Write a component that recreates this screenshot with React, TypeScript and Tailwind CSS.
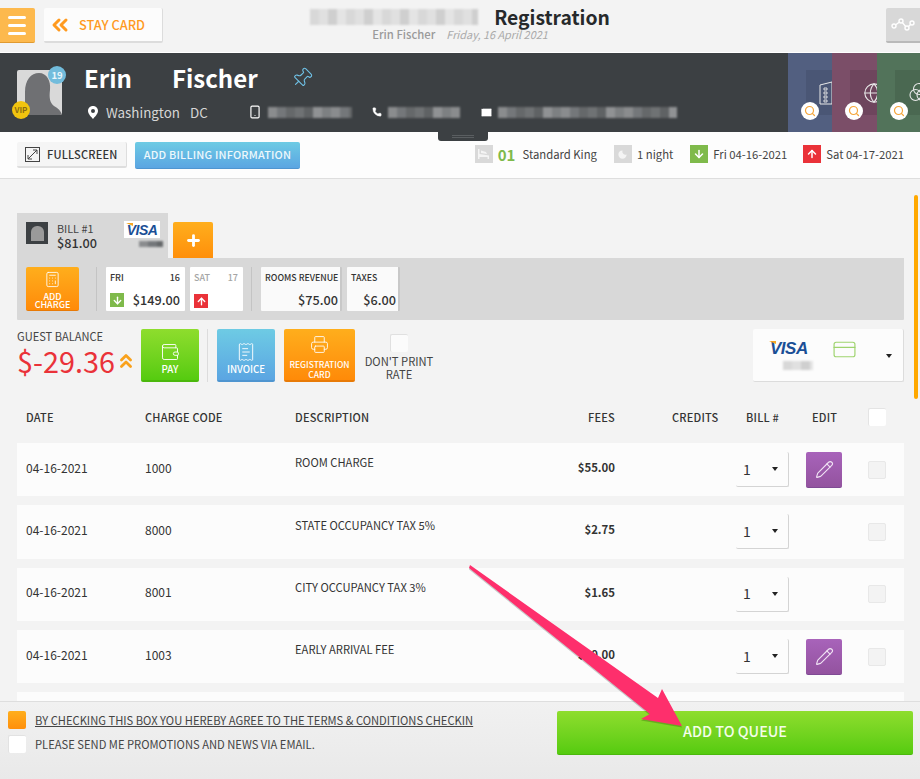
import {
  ArrowDown,
  ArrowUp,
  Calculator,
  ChevronsLeft,
  ChevronsUp,
  CreditCard,
  Globe,
  Mail,
  Pencil,
  Phone,
  Pin,
  Plus,
  Printer,
  ReceiptText,
  Search,
  Smartphone,
  Wallet,
} from "lucide-react";
import type { ReactNode } from "react";

const shades = ["#8a8c8e", "#6f7274", "#7d8082", "#65686a", "#909294", "#74777a", "#5f6264"];

// pixelated block standing in for the redacted values
function Mosaic({ width, height, light }: { width: number; height: number; light?: boolean }) {
  const cells = Array.from({ length: Math.ceil(width / 9) }, (_, i) => i);
  return (
    <div className="flex overflow-hidden blur-[1px]" style={{ width, height }}>
      {cells.map((i) => (
        <div
          key={i}
          className="h-full w-[9px] shrink-0"
          style={{
            background: light
              ? ["#d8d8d8", "#e4e4e4", "#cfcfcf", "#e0e0e0"][(i * 3) % 4]
              : shades[(i * 5) % shades.length],
          }}
        />
      ))}
    </div>
  );
}

function SquareIcon({ color, children }: { color: string; children: ReactNode }) {
  return <div className={`flex h-[18px] w-[18px] items-center justify-center text-white ${color}`}>{children}</div>;
}

function VisaMark({ small }: { small?: boolean }) {
  return (
    <span
      className={`relative font-['Liberation_Sans',sans-serif] font-bold italic tracking-[-0.5px] text-[#1a4f96] ${
        small ? "text-[14px] leading-[14px]" : "text-[17px] leading-[16px]"
      }`}
    >
      <span className="absolute left-[-1px] top-[0px] h-0 w-0 border-l-[7px] border-t-[3px] border-l-transparent border-t-[#f5a623]" />
      VISA
    </span>
  );
}

function SideTab({ width, color, inner, icon }: { width: string; color: string; inner: string; icon: ReactNode }) {
  return (
    <div className={`relative overflow-hidden ${width} ${color}`}>
      <div className={`ml-[18px] mt-[17px] flex h-[45px] w-[45px] items-center pl-[13px] text-[#e8e8e8] ${inner}`}>
        {icon}
      </div>
      <div className="absolute left-[13px] top-[49px] flex h-[18px] w-[18px] items-center justify-center rounded-full bg-white text-[#f5a53a]">
        <Search size={12} strokeWidth={2.4} />
      </div>
    </div>
  );
}

function ActionButton({
  width,
  tone,
  icon,
  children,
}: {
  width: string;
  tone: string;
  icon: ReactNode;
  children: ReactNode;
}) {
  return (
    <div
      className={`flex h-[53px] flex-col items-center rounded-[2px] border-b-2 font-medium text-white ${width} ${tone}`}
    >
      {icon}
      <div className="text-center">{children}</div>
    </div>
  );
}

const orange = "bg-gradient-to-b from-[#ffae1c] to-[#ff8a08] border-[#e87a06]";

function DayCard({
  day,
  date,
  amount,
  width,
  muted,
  up,
}: {
  day: string;
  date: string;
  amount?: string;
  width: string;
  muted?: boolean;
  up?: boolean;
}) {
  return (
    <div className={`flex h-[44px] flex-col justify-between rounded-[1px] bg-white pb-[3px] pl-[4px] pr-[5px] pt-[5px] ${width}`}>
      <div className={`flex justify-between text-[9px] font-medium leading-[12px] ${muted ? "text-[#a5a5a5]" : "text-[#333]"}`}>
        <span>{day}</span>
        <span>{date}</span>
      </div>
      <div className="flex items-center justify-between">
        <div className={`flex h-[14px] w-[14px] items-center justify-center text-white ${up ? "bg-[#ea3239]" : "bg-[#7fba4b]"}`}>
          {up ? <ArrowUp size={11} strokeWidth={3} /> : <ArrowDown size={11} strokeWidth={3} />}
        </div>
        {amount && <span className="text-[12.7px] font-medium leading-[16px] text-[#333]">{amount}</span>}
      </div>
    </div>
  );
}

function TotalCard({ label, amount, width }: { label: string; amount: string; width: string }) {
  return (
    <div className={`flex h-[44px] flex-col justify-between rounded-[1px] border-r-2 border-[#c8c8c8] bg-[#fafafa] pb-[3px] pl-[4px] pr-[2px] pt-[5px] ${width}`}>
      <div className="whitespace-nowrap text-[8.8px] font-medium leading-[12px] text-[#333]">{label}</div>
      <div className="text-right text-[12.7px] font-medium leading-[16px] text-[#333]">{amount}</div>
    </div>
  );
}

const columns = "grid grid-cols-[119px_150px_220px_100px_121px_70px_62px_18px] px-[9px]";

const rows = [
  { code: "1000", text: "ROOM CHARGE", fee: "$55.00", edit: true },
  { code: "8000", text: "STATE OCCUPANCY TAX 5%", fee: "$2.75", edit: false },
  { code: "8001", text: "CITY OCCUPANCY TAX 3%", fee: "$1.65", edit: false },
  { code: "1003", text: "EARLY ARRIVAL FEE", fee: "$10.00", edit: true },
];

function ChargeRow({ code, text, fee, edit }: { code: string; text: string; fee: string; edit: boolean }) {
  return (
    <div className={`${columns} h-[53.3px] items-center bg-[#fcfcfc] text-[#333]`}>
      <div className="mb-[4px] text-[12px]">04-16-2021</div>
      <div className="mb-[4px] text-[12px]">{code}</div>
      <div className="mb-[14px] text-[11.2px]">{text}</div>
      <div className="mb-[4px] text-right text-[11.4px] font-bold">{fee}</div>
      <div />
      <div className="flex h-[35px] w-[53px] items-center justify-between rounded-[2px] border-b border-r border-[#d4d4d4] pl-[7px] pr-[10px] text-[14px]">
        <span>1</span>
        <span className="h-0 w-0 border-x-[3px] border-t-[4px] border-x-transparent border-t-[#222]" />
      </div>
      <div>
        {edit && (
          <div className="flex h-[36px] w-[36px] items-center justify-center rounded-[2px] border-b border-[#7f4a94] bg-gradient-to-b from-[#a863ba] to-[#93539f] text-[#f0e3f4]">
            <Pencil size={19} strokeWidth={1.4} />
          </div>
        )}
      </div>
      <div className="h-[18px] w-[18px] rounded-[2px] border border-[#e8e8e8] bg-[#f3f3f3]" />
    </div>
  );
}

export default function App() {
  return (
    <div className="relative flex h-[779px] w-[920px] flex-col overflow-hidden bg-[#f3f3f3] font-['Noto_Sans_CJK_SC','Liberation_Sans',sans-serif]">
      {/* top bar */}
      <header className="grid h-[52px] shrink-0 grid-cols-[1fr_auto_1fr] bg-[#f3f3f3]">
        <div className="flex items-start gap-[9px] pt-[8px]">
          <div className="flex h-[35px] w-[35px] flex-col items-center justify-center gap-[5px] rounded-r-[2px] border-b border-[#e09a30] bg-[#fdb94d] pr-[1px]">
            <span className="h-[3px] w-[18px] rounded-full bg-white" />
            <span className="h-[3px] w-[18px] rounded-full bg-white" />
            <span className="h-[3px] w-[18px] rounded-full bg-white" />
          </div>
          <div className="flex h-[35px] w-[119px] items-center rounded-[2px] border-b-2 border-r border-[#dcdcdc] bg-[#fcfcfc] pl-[4px] text-[12.8px] font-medium text-[#ff9a1f]">
            <ChevronsLeft size={24} strokeWidth={3} className="shrink-0" />
            <span className="ml-[7px]">STAY CARD</span>
          </div>
        </div>
        <div className="flex flex-col items-center pt-[5px]">
          <div className="flex h-[24px] items-center gap-[16px]">
            <Mosaic width={168} height={16} light />
            <span className="text-[19.3px] font-bold leading-[24px] text-[#26292b]">Registration</span>
          </div>
          <div className="-mt-[3px] flex items-baseline gap-[11px] leading-[16px]">
            <span className="text-[11.3px] font-medium text-[#9a9a9a]">Erin Fischer</span>
            <span className="text-[10.9px] italic text-[#aaa]">Friday, 16 April 2021</span>
          </div>
        </div>
        <div className="flex justify-end pt-[8px]">
          <div className="flex h-[35px] w-[34px] items-center justify-center rounded-l-[2px] border-b-2 border-[#b9b9b9] bg-[#d8d8d8]">
            <svg width="24" height="14" viewBox="0 0 24 14" fill="none" stroke="white" strokeWidth="1.4">
              <path d="M3 8 L10 3 L16 10 L21 5" />
              <circle cx="3" cy="8" r="2" fill="#d8d8d8" />
              <circle cx="10" cy="3" r="2" fill="#d8d8d8" />
              <circle cx="16" cy="10" r="2" fill="#d8d8d8" />
              <circle cx="21" cy="5" r="2" fill="#d8d8d8" />
            </svg>
          </div>
        </div>
      </header>

      {/* guest band */}
      <section className="relative flex h-[80px] shrink-0 border-t border-[#fff] bg-[#3c4043]">
        <div className="relative ml-[17px] mt-[17px] h-[45px] w-[45px] overflow-hidden rounded-[2px] bg-[#d9d9d9]">
          <svg viewBox="0 0 45 45" className="h-full w-full" fill="#6f7073">
            <path d="M8 45 V22 C8 10 14 3 22 3 C30 3 34 11 33 20 C32 28 33 33 37 36 C41 38 44 41 45 45 Z" />
          </svg>
        </div>
        <div className="absolute left-[48px] top-[13px] flex h-[18px] w-[18px] items-center justify-center rounded-full bg-[#72bcdc] text-[9.5px] font-bold text-[#e9f6fb]">
          19
        </div>
        <div className="absolute left-[12px] top-[48px] flex h-[18px] w-[18px] items-center justify-center rounded-full bg-[#f1c40f] text-[8px] font-bold text-[#8a6d12]">
          VIP
        </div>
        <div className="ml-[22px] flex flex-1 flex-col pt-[7px]">
          <div className="flex h-[36px] items-center text-[24px] font-bold leading-[36px] text-white">
            <span className="w-[88px]">Erin</span>
            <span>Fischer</span>
            <Pin size={22} strokeWidth={1.2} className="ml-[33px] rotate-45 text-[#6fc1e6]" />
          </div>
          <div className="mt-[6px] flex h-[20px] items-center text-[13.4px] text-[#d6d6d6]">
            <svg width="10" height="13" viewBox="0 0 10 13" className="ml-[4px] shrink-0" fill="white" fillRule="evenodd">
              <path d="M5 0 C8 0 10 2.2 10 5 C10 8 6.5 11 5 13 C3.5 11 0 8 0 5 C0 2.2 2 0 5 0 Z M5 3 A2 2 0 1 0 5 7 A2 2 0 1 0 5 3 Z" />
            </svg>
            <span className="ml-[8px] w-[84px]">Washington</span>
            <span className="w-[58px]">DC</span>
            <Smartphone size={14} strokeWidth={2} className="shrink-0 text-white" />
            <div className="ml-[6px]">
              <Mosaic width={84} height={11} />
            </div>
            <Phone size={10} fill="white" strokeWidth={1} className="ml-[20px] shrink-0 text-white" />
            <div className="ml-[6px]">
              <Mosaic width={72} height={11} />
            </div>
            <Mail size={13} fill="white" stroke="#3c4043" strokeWidth={1.6} className="ml-[20px] shrink-0" />
            <div className="ml-[5px]">
              <Mosaic width={179} height={11} />
            </div>
          </div>
        </div>
        <SideTab
          width="w-[44px]"
          color="bg-[#525f80]"
          inner="bg-[#4a5675]"
          icon={
            <svg width="22" height="24" viewBox="0 0 22 24" fill="none" stroke="currentColor" strokeWidth="1" className="shrink-0">
              <path d="M1 4 L13 1 V23 H1 Z" />
              <path d="M5 7 H8 V9 H5 Z M5 11 H8 V13 H5 Z M5 15 H8 V17 H5 Z M5 19 H8 V21 H5 Z" strokeWidth="0.9" />
            </svg>
          }
        />
        <SideTab width="w-[45px]" color="bg-[#7b4e68]" inner="bg-[#6e455d]" icon={<Globe size={22} strokeWidth={1.2} className="shrink-0" />} />
        <SideTab
          width="w-[43px]"
          color="bg-[#52735a]"
          inner="bg-[#4a6851]"
          icon={
            <svg width="22" height="22" viewBox="0 0 22 22" fill="none" stroke="currentColor" strokeWidth="1.1" className="shrink-0">
              <circle cx="11" cy="7" r="5.5" />
              <circle cx="7.5" cy="13" r="5.5" />
              <circle cx="14.5" cy="13" r="5.5" />
            </svg>
          }
        />
      </section>

      {/* toolbar */}
      <section className="relative flex h-[47px] shrink-0 items-center justify-between border-b border-[#dedede] bg-[#fdfdfd] pl-[17px] pr-[16px]">
        <div className="absolute left-[438px] top-0 flex h-[9px] w-[50px] items-center justify-center rounded-b-[3px] bg-[#3c4043]">
          <div className="h-[3px] w-[22px] border-y border-[#5a5e61]" />
        </div>
        <div className="flex items-center gap-[8px]">
          <div className="flex h-[26px] w-[110px] items-center rounded-[2px] border-b-2 border-r border-[#dedede] bg-[#f5f5f5] pl-[8px] text-[11px] font-medium tracking-[0.2px] text-[#333]">
            <svg width="15" height="15" viewBox="0 0 15 15" fill="none" stroke="#444" strokeWidth="1">
              <rect x="0.5" y="0.5" width="14" height="14" />
              <path d="M3 12 L12 3 M8 3 H12 V7 M3 8 V12 H7" />
            </svg>
            <span className="ml-[7px]">FULLSCREEN</span>
          </div>
          <div className="flex h-[27px] w-[165px] items-center justify-center rounded-[2px] border-b border-[#4f95d0] bg-gradient-to-b from-[#6ecbe4] to-[#5ba5e2] text-[10.9px] font-medium tracking-[0.2px] text-[#eef8fc]">
            ADD BILLING INFORMATION
          </div>
        </div>
        <div className="-mt-[2px] flex items-center text-[11.3px] text-[#444]">
          <SquareIcon color="bg-[#d9d9d9]">
            <svg width="12" height="10" viewBox="0 0 12 10" fill="#f4f4f4">
              <path d="M0 0 H1.5 V5 L11 6.5 V10 H9.5 V8 H1.5 V10 H0 Z M3 1.5 L8 3 L9 5 L3 4 Z" />
            </svg>
          </SquareIcon>
          <span className="ml-[5px] text-[15px] font-bold leading-none text-[#7fba4b]">01</span>
          <span className="ml-[7px]">Standard King</span>
          <div className="ml-[17px]">
            <SquareIcon color="bg-[#d9d9d9]">
              <svg width="11" height="11" viewBox="0 0 24 24" fill="#f4f4f4">
                <path d="M12 3a9 9 0 1 0 9 9 7 7 0 0 1-9-9z" />
              </svg>
            </SquareIcon>
          </div>
          <span className="ml-[5px]">1 night</span>
          <div className="ml-[17px]">
            <SquareIcon color="bg-[#7fba4b]">
              <ArrowDown size={12} strokeWidth={3} />
            </SquareIcon>
          </div>
          <span className="ml-[5px]">Fri 04-16-2021</span>
          <div className="ml-[16px]">
            <SquareIcon color="bg-[#ea3239]">
              <ArrowUp size={12} strokeWidth={3} />
            </SquareIcon>
          </div>
          <span className="ml-[5px]">Sat 04-17-2021</span>
        </div>
      </section>

      {/* scrolling content */}
      <main className="relative min-h-0 flex-1 overflow-hidden pl-[17px] pr-[16px] pt-[34px]">
        <div className="absolute left-[914px] top-[16px] h-[204px] w-[4px] rounded-full bg-[#ffa800]" />

        <div className="flex items-end gap-[5px]">
          <div className="flex h-[45px] w-[151px] items-start bg-[#d8d8d8] pl-[9px] pt-[9px]">
            <div className="flex h-[22px] w-[22px] shrink-0 items-center justify-center bg-[#3c4043]">
              <div className="h-[15px] w-[13px] rounded-t-[6px] bg-[#9a9a9a]" />
            </div>
            <div className="ml-[9px] mt-[-1px] flex w-[55px] shrink-0 flex-col">
              <span className="text-[10.8px] leading-[14px] text-[#444]">BILL #1</span>
              <span className="text-[12.7px] font-medium leading-[15px] text-[#333]">$81.00</span>
            </div>
            <div className="ml-[12px] mt-[-1px] flex flex-col items-end">
              <div className="flex h-[17px] w-[36px] items-center justify-center bg-white">
                <VisaMark small />
              </div>
              <div className="mr-[-3px] mt-[3px]">
                <Mosaic width={24} height={6} />
              </div>
            </div>
          </div>
          <div className="flex h-[36px] w-[40px] items-center justify-center rounded-t-[2px] bg-gradient-to-b from-[#ffae1c] to-[#ff8f0a] text-white">
            <Plus size={17} strokeWidth={4} />
          </div>
        </div>

        <div className="flex h-[62px] w-[887px] items-start rounded-b-[1px] bg-[#d8d8d8] pl-[9px] pt-[9px]">
          <div className={`flex h-[44px] w-[53px] flex-col items-center rounded-[2px] border-b pt-[4px] text-[9px] font-medium leading-[8px] text-white ${orange}`}>
            <Calculator size={17} strokeWidth={1.2} />
            <span className="mt-[5px]">ADD</span>
            <span>CHARGE</span>
          </div>
          <div className="ml-[17px] mr-[9px] h-[44px] w-px bg-[#c4c4c4]" />
          <div className="flex gap-[5px]">
            <DayCard day="FRI" date="16" amount="$149.00" width="w-[79px]" />
            <DayCard day="SAT" date="17" width="w-[53px]" muted up />
          </div>
          <div className="mx-[8px] h-[44px] w-px bg-[#c4c4c4]" />
          <div className="ml-[1px] flex gap-[5px]">
            <TotalCard label="ROOMS REVENUE" amount="$75.00" width="w-[81px]" />
            <TotalCard label="TAXES" amount="$6.00" width="w-[53px]" />
          </div>
        </div>

        <div className="mt-[9px] flex h-[53px] w-[887px] items-start">
          <div className="w-[124px] shrink-0">
            <div className="text-[11.1px] leading-[14px] text-[#444]">GUEST BALANCE</div>
            <div className="flex items-center text-[#ea3239]">
              <span className="text-[28.8px] leading-[35px]">$-29.36</span>
              <ChevronsUp size={22} strokeWidth={3} className="shrink-0 text-[#f9a11b]" />
            </div>
          </div>
          <ActionButton
            width="w-[58px]"
            tone="bg-gradient-to-b from-[#8edd2d] to-[#55cb0f] border-[#4bb80c] pt-[13px]"
            icon={<Wallet size={20} strokeWidth={1.1} />}
          >
            <div className="mt-[2px] text-[9.7px] leading-[10px]">PAY</div>
          </ActionButton>
          <div className="mx-[8px] h-[53px] w-px bg-[#dcdcdc]" />
          <ActionButton
            width="ml-[1px] w-[58px]"
            tone="bg-gradient-to-b from-[#6ecbe4] to-[#5ba5e2] border-[#4f95d0] pt-[13px]"
            icon={<ReceiptText size={20} strokeWidth={1.1} />}
          >
            <div className="mt-[2px] text-[9.7px] leading-[10px]">INVOICE</div>
          </ActionButton>
          <ActionButton width="ml-[9px] w-[71px]" tone={`${orange} pt-[6px]`} icon={<Printer size={19} strokeWidth={1.1} />}>
            <div className="mt-[5px] text-[8.5px] leading-[10px]">
              REGISTRATION
              <br />
              CARD
            </div>
          </ActionButton>
          <div className="ml-[5px] flex w-[78px] flex-col items-center pt-[5px]">
            <div className="h-[18px] w-[18px] rounded-[2px] border-l border-t border-[#e0e0e0] bg-[#fbfbfb]" />
            <div className="mt-[3px] text-center text-[11.2px] leading-[13px] text-[#444]">
              DON'T PRINT
              <br />
              RATE
            </div>
          </div>
          <div className="ml-auto flex h-[53px] w-[151px] items-start rounded-[2px] border-b border-r border-[#dcdcdc] bg-[#fcfcfc] pl-[17px] pt-[12px]">
            <div className="flex w-[40px] flex-col items-start">
              <VisaMark />
              <div className="ml-[13px] mt-[4px]">
                <Mosaic width={30} height={9} light />
              </div>
            </div>
            <CreditCard size={25} strokeWidth={1.1} className="ml-[22px] mt-[-4px] shrink-0 text-[#9ed36d]" />
            <span className="ml-[29px] mt-[13px] h-0 w-0 border-x-[3.5px] border-t-[4px] border-x-transparent border-t-[#222]" />
          </div>
        </div>

        <div className={`${columns} mt-[26px] h-[18px] w-[887px] items-center text-[11px] font-medium tracking-[0.2px] text-[#333]`}>
          <span>DATE</span>
          <span>CHARGE CODE</span>
          <span>DESCRIPTION</span>
          <span className="text-right">FEES</span>
          <span className="pl-[57px]">CREDITS</span>
          <span className="pl-[10px]">BILL #</span>
          <span className="pl-[6px]">EDIT</span>
          <div className="h-[18px] w-[18px] rounded-[2px] border-l border-t border-[#e4e4e4] bg-white" />
        </div>

        <div className="mt-[17px] flex w-[887px] flex-col gap-[9px]">
          {rows.map((row) => (
            <ChargeRow key={row.code} {...row} />
          ))}
          <div className="h-[53px] bg-[#fcfcfc]" />
        </div>
      </main>

      {/* agreement footer */}
      <footer className="flex h-[78px] shrink-0 border-t border-[#dedede] bg-gradient-to-b from-[#f1f1f1] to-[#e9e9e9] pl-[8px] pt-[9px]">
        <div className="flex flex-col gap-[6px] text-[11.2px] leading-[18px] text-[#444]">
          <div className="flex items-center">
            <div className="h-[18px] w-[18px] rounded-[2px] bg-gradient-to-b from-[#ffae1c] to-[#ff8f0a]" />
            <span className="ml-[9px] underline">BY CHECKING THIS BOX YOU HEREBY AGREE TO THE TERMS &amp; CONDITIONS CHECKIN</span>
          </div>
          <div className="flex items-center">
            <div className="h-[18px] w-[18px] rounded-[2px] border-l border-t border-[#e2e2e2] bg-white" />
            <span className="ml-[9px]">PLEASE SEND ME PROMOTIONS AND NEWS VIA EMAIL.</span>
          </div>
        </div>
        <div className="ml-auto mr-[7px] flex h-[44px] w-[356px] items-center justify-center rounded-[2px] border-b border-[#4bb80c] bg-gradient-to-b from-[#8edd2d] to-[#55cb0f] pb-[3px] text-[14.4px] font-medium text-[#f4fdea]">
          ADD TO QUEUE
        </div>
      </footer>

      {/* annotation arrow over the page */}
      <svg className="pointer-events-none absolute inset-0" width="920" height="779" viewBox="0 0 920 779">
        <polygon points="470,565 658,698 662,689 682,726 641,719 650,714 469,568" fill="#000" opacity="0.2" transform="translate(0 1.5)" />
        <polygon points="470,565 658,698 662,689 682,726 641,719 650,714 469,568" fill="#fe2f6c" />
      </svg>
    </div>
  );
}
